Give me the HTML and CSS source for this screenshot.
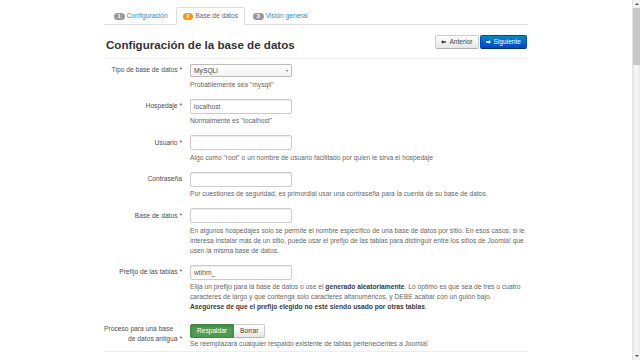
FILE: index.html
```html
<!DOCTYPE html>
<html lang="es">
<head>
<meta charset="utf-8">
<title>Instalación de Joomla!</title>
<link rel="stylesheet" href="styles.css">
</head>
<body>
<div class="screen">
  <div class="main">
    <div class="page">
      <ul class="tabs">
        <li class="tab"><a href="#"><span class="badge">1</span>Configuración</a></li>
        <li class="tab active"><a href="#"><span class="badge badge-warning">2</span>Base de datos</a></li>
        <li class="tab"><a href="#"><span class="badge">3</span>Visión general</a></li>
      </ul>

      <div class="head">
        <h3 class="title">Configuración de la base de datos</h3>
        <div class="nav-btns">
          <a class="btn" href="#"><svg class="arrow" viewBox="0 0 6 5" width="5" height="4"><path d="M0 2.5L2.5 0V1.6H6V3.4H2.5V5Z" fill="#333"/></svg>Anterior</a>
          <a class="btn btn-primary" href="#"><svg class="arrow" viewBox="0 0 6 5" width="5" height="4"><path d="M6 2.5L3.5 0V1.6H0V3.4H3.5V5Z" fill="#fff"/></svg>Siguiente</a>
        </div>
      </div>

      <div class="form">
        <div class="row row-select">
          <div class="label">Tipo de base de datos *</div>
          <div class="controls">
            <div class="select"><span>MySQLi</span><span class="caret"></span></div>
            <div class="help">Probablemente sea "mysqli"</div>
          </div>
        </div>

        <div class="row">
          <div class="label">Hospedaje *</div>
          <div class="controls">
            <div class="input">localhost</div>
            <div class="help">Normalmente es "localhost"</div>
          </div>
        </div>

        <div class="row">
          <div class="label">Usuario *</div>
          <div class="controls">
            <div class="input"></div>
            <div class="help">Algo como "root" o un nombre de usuario facilitado por quien le sirva el hospedaje</div>
          </div>
        </div>

        <div class="row">
          <div class="label">Contraseña</div>
          <div class="controls">
            <div class="input"></div>
            <div class="help">Por cuestiones de seguridad, es primordial usar una contraseña para la cuenta de su base de datos.</div>
          </div>
        </div>

        <div class="row">
          <div class="label">Base de datos *</div>
          <div class="controls">
            <div class="input"></div>
            <div class="help">En algunos hospedajes solo se permite el nombre específico de una base de datos por sitio. En esos casos, si le<br>interesa instalar más de un sitio, puede usar el prefijo de las tablas para distinguir entre los sitios de Joomla! que<br>usen la misma base de datos.</div>
          </div>
        </div>

        <div class="row">
          <div class="label">Prefijo de las tablas *</div>
          <div class="controls">
            <div class="input">wtihm_</div>
            <div class="help">Elija un prefijo para la base de datos o use el <b>generado aleatoriamente</b>. Lo óptimo es que sea de tres o cuatro<br>caracteres de largo y que contenga solo caracteres alfanuméricos, y DEBE acabar con un guión bajo.<br><b>Asegúrese de que el prefijo elegido no esté siendo usado por otras tablas</b>.</div>
          </div>
        </div>

        <div class="row row-last">
          <div class="label"><span class="ln ln-first">Proceso para una base</span><span class="ln">de datos antigua *</span></div>
          <div class="controls">
            <div class="btn-group">
              <span class="btn btn-success">Respaldar</span><span class="btn">Borrar</span>
            </div>
            <div class="help help-tight">Se reemplazará cualquier respaldo existente de tablas pertenecientes a Joomla!</div>
          </div>
        </div>
      </div>
    </div>
  </div>

  <div class="scrollbar">
    <div class="sb-arrow"><span class="tri-up"></span></div>
    <div class="sb-thumb"></div>
    <div class="sb-track"></div>
    <div class="sb-arrow"><span class="tri-down"></span></div>
  </div>
</div>
</body>
</html>
```

FILE: styles.css
```css
* { box-sizing: border-box; }

html, body {
  margin: 0;
  padding: 0;
  height: 100%;
}

body {
  font-family: "Liberation Sans", Arial, Helvetica, sans-serif;
  font-size: 6.7px;
  line-height: 10px;
  color: #333;
  background: #fff;
  overflow: hidden;
}

.screen {
  display: flex;
  width: 640px;
  height: 360px;
}

.main {
  flex: 1;
  min-width: 0;
}

.page {
  width: 424px;
  margin: 0 auto;
}

/* Tabs */
.tabs {
  display: flex;
  list-style: none;
  margin: 0;
  padding: 7px 0 0 3px;
  border-bottom: 1px solid #ddd;
}

.tab {
  margin-right: 1px;
  margin-bottom: -1px;
}

.tab a {
  display: flex;
  align-items: center;
  gap: 2px;
  padding: 3px 6px;
  line-height: 10px;
  border: 1px solid transparent;
  border-radius: 2px 2px 0 0;
  color: #1a8fcc;
  text-decoration: none;
}

.tab.active a {
  color: #666;
  background: #fff;
  border-color: #ddd #ddd transparent;
}

.badge {
  display: inline-block;
  min-width: 10.5px;
  padding: 0 3px;
  font-size: 6px;
  font-weight: bold;
  line-height: 7px;
  color: #fff;
  text-align: center;
  background: #999;
  border-radius: 4px;
}

.badge-warning {
  background: #f89406;
}

/* Heading */
.head {
  display: flex;
  justify-content: space-between;
  align-items: flex-start;
  padding: 10px 0 4px;
  border-bottom: 1px solid #eee;
}

.title {
  margin: 0 0 0 2px;
  font-size: 11.6px;
  line-height: 19px;
  font-weight: bold;
  color: #333;
}

.nav-btns {
  display: flex;
  gap: 1px;
  margin-right: 1px;
}

.btn {
  display: inline-flex;
  align-items: center;
  gap: 3px;
  height: 14px;
  padding: 0 6px;
  font-size: 6.6px;
  line-height: 10px;
  color: #444;
  text-decoration: none;
  background: linear-gradient(#fff, #e6e6e6);
  border: 1px solid #ccc;
  border-bottom-color: #b3b3b3;
  border-radius: 2px;
}

.nav-btns .btn {
  padding: 0 5px;
}

.btn-primary {
  color: #fff;
  background: linear-gradient(#0088cc, #0044cc);
  border-color: #0044cc #0044cc #002a80;
}

.arrow {
  display: block;
}

/* Form */
.form {
  padding-top: 5px;
}

.row {
  display: flex;
  margin-bottom: 9px;
}

.label {
  flex: none;
  width: 78px;
  margin-right: 8px;
  padding-top: 2.5px;
  text-align: right;
  color: #4d4d4d;
}

.ln {
  display: block;
  white-space: nowrap;
}

.ln-first {
  padding-right: 10px;
}

.row-select .label {
  padding-top: 1px;
}

.controls {
  flex: 1;
  min-width: 0;
}

.input {
  width: 102px;
  height: 15px;
  padding: 0 3px;
  line-height: 13px;
  color: #555;
  background: #fff;
  border: 1px solid #ccc;
  border-radius: 2px;
  box-shadow: inset 0 1px 1px rgba(0, 0, 0, 0.075);
}

.select {
  display: flex;
  align-items: center;
  justify-content: space-between;
  width: 102px;
  height: 13px;
  padding: 0 3px;
  color: #444;
  background: linear-gradient(#fff, #f2f2f2);
  border: 1px solid #bbb;
  border-radius: 1px;
}

.caret {
  width: 0;
  height: 0;
  border-left: 1.5px solid transparent;
  border-right: 1.5px solid transparent;
  border-top: 2px solid #777;
}

.help {
  margin-top: 2.5px;
  color: #666;
  white-space: nowrap;
}

.help b {
  color: #3a3a3a;
}

.help-tight {
  margin-top: 1px;
}

.btn-group {
  display: flex;
  padding-top: 3px;
}

.btn-group .btn {
  height: 14px;
  padding: 0 6px;
}

.btn-group .btn:first-child {
  border-radius: 2px 0 0 2px;
}

.btn-group .btn:last-child {
  border-radius: 0 2px 2px 0;
  border-left: 0;
}

.btn-success {
  color: #fff;
  background: #4f9e4f;
  border-color: #3e8a3e;
  box-shadow: inset 0 1px 3px rgba(0, 0, 0, 0.2);
}

.row-last {
  margin-bottom: 4px;
  padding-bottom: 2px;
  border-bottom: 1px solid #eee;
}

/* Fake browser scrollbar */
.scrollbar {
  flex: none;
  width: 8px;
  display: flex;
  flex-direction: column;
  background: #f0f0f0;
  border-left: 1px solid #e4e4e4;
}

.sb-arrow {
  flex: none;
  height: 8px;
  display: flex;
  align-items: center;
  justify-content: center;
  background: #f0f0f0;
}

.tri-up,
.tri-down {
  width: 0;
  height: 0;
  border-left: 2px solid transparent;
  border-right: 2px solid transparent;
}

.tri-up {
  border-bottom: 2px solid #505050;
}

.tri-down {
  border-top: 2px solid #505050;
}

.sb-thumb {
  flex: none;
  height: 57px;
  background: #c8c8c8;
}

.sb-track {
  flex: 1;
  background: linear-gradient(90deg, #e8e8e8, #f6f6f6 40%, #f6f6f6 60%, #e8e8e8);
}
```
